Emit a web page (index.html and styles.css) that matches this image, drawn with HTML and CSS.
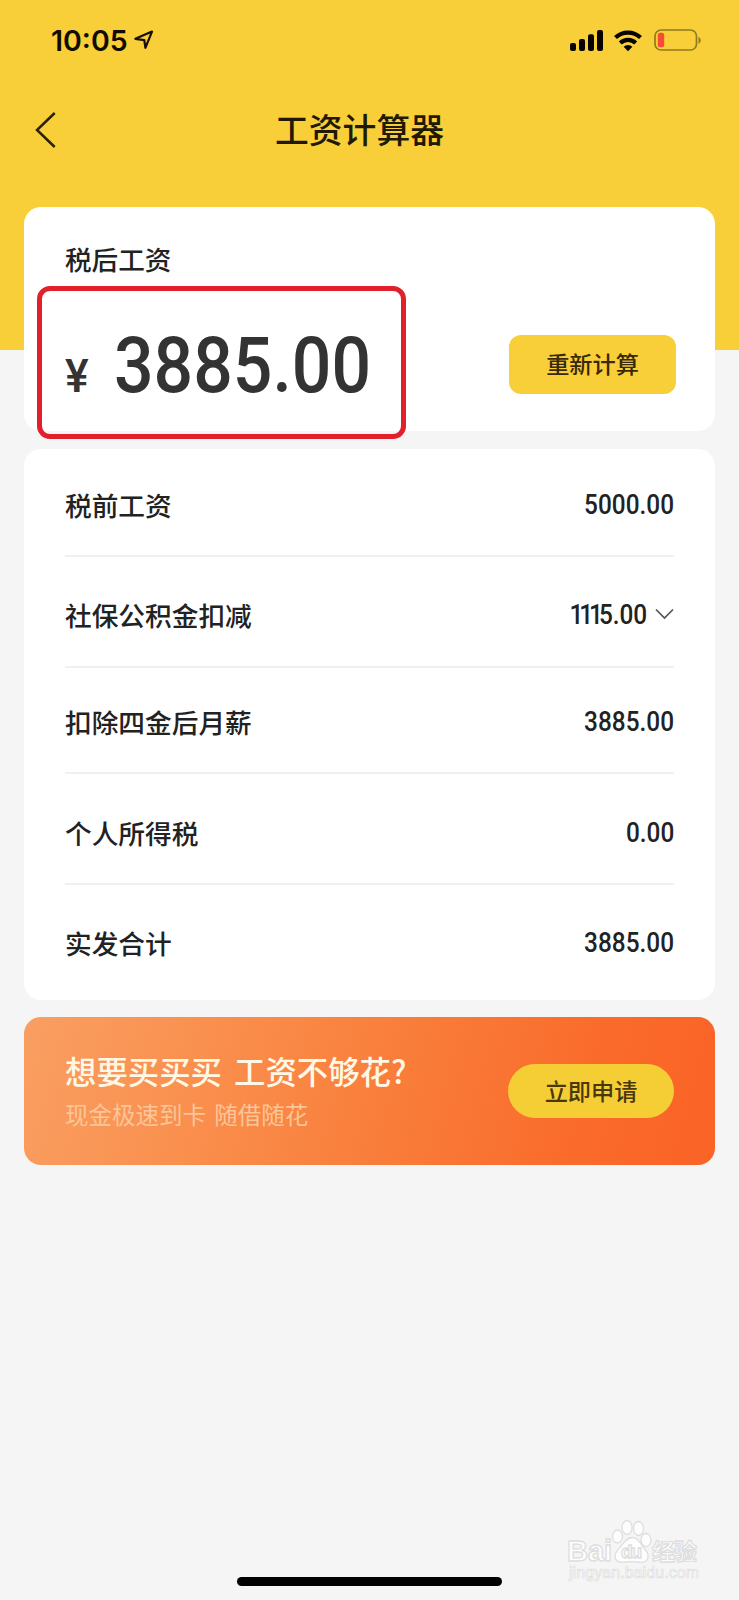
FILE: index.html
```html
<!DOCTYPE html>
<html lang="zh-CN">
<head>
<meta charset="utf-8">
<title>工资计算器</title>
<link rel="stylesheet" href="styles.css">
</head>
<body>
<div class="screen">
  <header class="top">
    <div class="status">
      <div class="clock">
        <span class="time">10:05</span>
        <svg class="loc" width="20" height="20" viewBox="0 0 20 20"><path d="M1.400 8.800 18 1.600 11.400 17.800 10.300 10.200Z" fill="none" stroke="#171003" stroke-width="2.200" stroke-linejoin="round"/></svg>
      </div>
      <div class="signals">
        <svg width="34" height="22" viewBox="0 0 34 22"><g fill="#080500"><rect x="0" y="13" width="6" height="8" rx="2"/><rect x="9" y="9" width="6" height="12" rx="2"/><rect x="18" y="4.300" width="6" height="16.700" rx="2"/><rect x="27" y="0" width="6" height="21" rx="2"/></g></svg>
        <svg width="28" height="22" viewBox="0 0 28 22"><g fill="none" stroke="#080500" stroke-width="4.200"><path d="M1.500 7.600a18 18 0 0 1 25 0"/><path d="M6.300 13a11 11 0 0 1 15.400 0"/></g><path d="M9.600 16.700a6.300 6.300 0 0 1 8.800 0L14 21.200z" fill="#080500"/></svg>
        <svg class="battery" width="48" height="22" viewBox="0 0 48 22"><rect x="1" y="1" width="41.500" height="20" rx="6" fill="none" stroke="#917a1f" stroke-width="1.700"/><rect x="3.800" y="3.700" width="6.400" height="14.600" rx="2.500" fill="#f9493a"/><path d="M44.500 7.700c3 1.500 3 5.700 0 7z" fill="#917a1f"/></svg>
      </div>
    </div>
    <nav class="nav">
      <svg class="back" width="22" height="38" viewBox="0 0 22 38"><path d="M19.700 2 2 19 19.700 36" fill="none" stroke="#2b2108" stroke-width="2.500"/></svg>
      <h1 class="title">工资计算器</h1>
    </nav>
  </header>
  <main class="content">
    <section class="card summary">
      <div class="summary-label">税后工资</div>
      <div class="summary-line">
        <div class="amount"><span class="yen">¥</span><span class="big">3885.00</span></div>
        <button class="recalc">重新计算</button>
      </div>
      <div class="highlight"></div>
    </section>
    <section class="card details">
      <div class="row r1"><span>税前工资</span><span class="num">5000.00</span></div>
      <div class="row r2"><span>社保公积金扣减</span><span class="value"><span class="num"><span class="ones">111</span>5.00</span><svg class="chev" width="19" height="12" viewBox="0 0 19 12"><path d="M1 1.500 9.500 10 18 1.500" fill="none" stroke="#555" stroke-width="1.700"/></svg></span></div>
      <div class="row r3"><span>扣除四金后月薪</span><span class="num">3885.00</span></div>
      <div class="row r4"><span>个人所得税</span><span class="num">0.00</span></div>
      <div class="row r5"><span>实发合计</span><span class="num">3885.00</span></div>
    </section>
    <section class="banner">
      <div class="promo">
        <div class="promo-title">想要买买买 工资不够花?</div>
        <div class="promo-sub">现金极速到卡 随借随花</div>
      </div>
      <button class="apply">立即申请</button>
    </section>
  </main>
  <svg class="watermark" width="140" height="70" viewBox="0 0 140 70">
    <g fill="#fdfdfd" stroke="#dedede" stroke-width="1.300">
      <text class="wm-brand" x="1" y="41" textLength="45">Bai</text>
      <ellipse cx="51.500" cy="16.500" rx="5" ry="6.500"/>
      <ellipse cx="61" cy="7.500" rx="5" ry="7"/>
      <ellipse cx="72.500" cy="8.500" rx="5" ry="7"/>
      <ellipse cx="80" cy="20" rx="5" ry="6.500"/>
      <path d="M66 17.500c5 0 7.500 4 10 8s7 6.500 6 12-7 5-10 4.500-8-.5-12 0-10 .5-11-4.500 3.500-8 6.500-12 5.500-8 10.500-8z"/>
      <text class="wm-du" x="55" y="38" textLength="21">du</text>
      <text class="wm-cn" x="86" y="40" textLength="45">经验</text>
    </g>
    <text class="wm-url" x="3" y="58" textLength="130">jingyan.baidu.com</text>
  </svg>
  <div class="home"></div>
</div>
</body>
</html>
```
FILE: styles.css
```css
* { box-sizing: border-box; }
body { margin: 0; background: #f5f5f5; font-family: "Liberation Sans", "Noto Sans CJK SC", sans-serif; }
.screen { position: relative; width: 739px; height: 1600px; overflow: hidden; background: #f5f5f5; }
.top { height: 350px; background: #f8cf38; }
.status { display: flex; justify-content: space-between; padding: 26px 37px 0 51px; height: 102px; }
.clock { display: flex; height: 30px; align-items: center; gap: 6px; }
.time { font: 600 28.500px/30px Inter, sans-serif; color: #110b00; width: 77px; white-space: nowrap; }
.loc { margin-top: -2px; }
.signals { display: flex; height: 22px; margin-top: 4px; }
.signals svg + svg { margin-left: 10px; }
.signals svg.battery { margin-left: 12px; margin-top: -1px; }
.nav { display: grid; grid-template-columns: 1fr auto 1fr; align-items: center; height: 56px; padding: 0 55px 0 35px; }
.title { margin: -1px 0 1px; font: 500 33.800px/50px "Noto Sans CJK SC", sans-serif; color: #221903; }
.content { display: flex; flex-direction: column; gap: 18px; margin: -143px 24px 0; }
.card { background: #fff; border-radius: 17px; }
.summary { position: relative; height: 224px; padding: 32px 39px 0 41px; }
.summary-label { font: 500 26.600px/40px "Noto Sans CJK SC", sans-serif; color: #222; }
.summary-line { display: flex; justify-content: space-between; height: 100px; margin-top: 17px; }
.amount { display: flex; color: #333; font-family: Roboto, sans-serif; align-items: baseline; padding-top: 30px; height: 100px; line-height: 80px; }
.yen { font-size: 46px; font-weight: 500; width: 49px; transform: scaleX(.97); transform-origin: left; }
.big { font-size: 77px; font-weight: 500; transform: scaleX(.905); transform-origin: left; }
.recalc, .apply { border: 0; padding: 0 0 4px; background: #f8cf38; font: 500 23.200px/34px "Noto Sans CJK SC", sans-serif; color: #38290a; }
.recalc { width: 167px; height: 59px; margin-top: 39px; border-radius: 12px; }
.highlight { position: absolute; left: 13px; top: 79px; width: 369px; height: 153px; border: 5px solid #e0202a; border-radius: 13px; }
.details { height: 551px; padding: 0 41px; }
.row { display: flex; justify-content: space-between; border-bottom: 2px solid #f0f0f0; color: #222; font: 500 26.700px/40px "Noto Sans CJK SC", sans-serif; }
.r1 { height: 108px; padding-top: 36px; }
.r2 { height: 111px; padding-top: 38px; }
.r3 { height: 106px; padding-top: 34px; }
.r4 { height: 111px; padding-top: 39px; }
.r5 { height: 115px; padding-top: 38px; border: 0; }
.num { font: 500 27.400px/41px Roboto, sans-serif; transform: scaleX(.89); transform-origin: right; }
.ones { letter-spacing: -4.600px; }
.value { display: flex; gap: 8px; }
.chev { margin-top: 13px; }
.banner { display: flex; justify-content: space-between; height: 148px; margin-top: -1px; padding: 33px 41px 0; border-radius: 17px; background: linear-gradient(105deg, #f99f62 0%, #fa8d4b 30%, #f97c39 55%, #fa6b2b 80%, #fa6326 100%); }
.promo { font-family: "Noto Sans CJK SC", sans-serif; }
.promo-title { color: #fff8e6; font-size: 31.400px; line-height: 42px; font-weight: 500; white-space: nowrap; word-spacing: 5px; }
.promo-sub { color: #fbc598; font-size: 23.500px; line-height: 34px; margin-top: 5px; font-weight: 400; white-space: nowrap; word-spacing: 3px; }
.apply { width: 166px; height: 54px; margin-top: 14px; border-radius: 27px; color: #4b380a; background: #f5ce36; padding-bottom: 3px; }
.watermark { position: absolute; left: 566px; top: 1520px; }
.wm-brand { font: bold 29px "Liberation Sans", sans-serif; }
.wm-du { font: bold 19px "Liberation Sans", sans-serif; }
.wm-cn { font: bold 23px "Noto Sans CJK SC", sans-serif; }
.wm-url { font: 16px "Liberation Sans", sans-serif; fill: #fdfdfd; stroke: #dedede; stroke-width: .7px; }
.home { position: absolute; left: 237px; top: 1577px; width: 265px; height: 9px; border-radius: 4.500px; background: #000; }
```
